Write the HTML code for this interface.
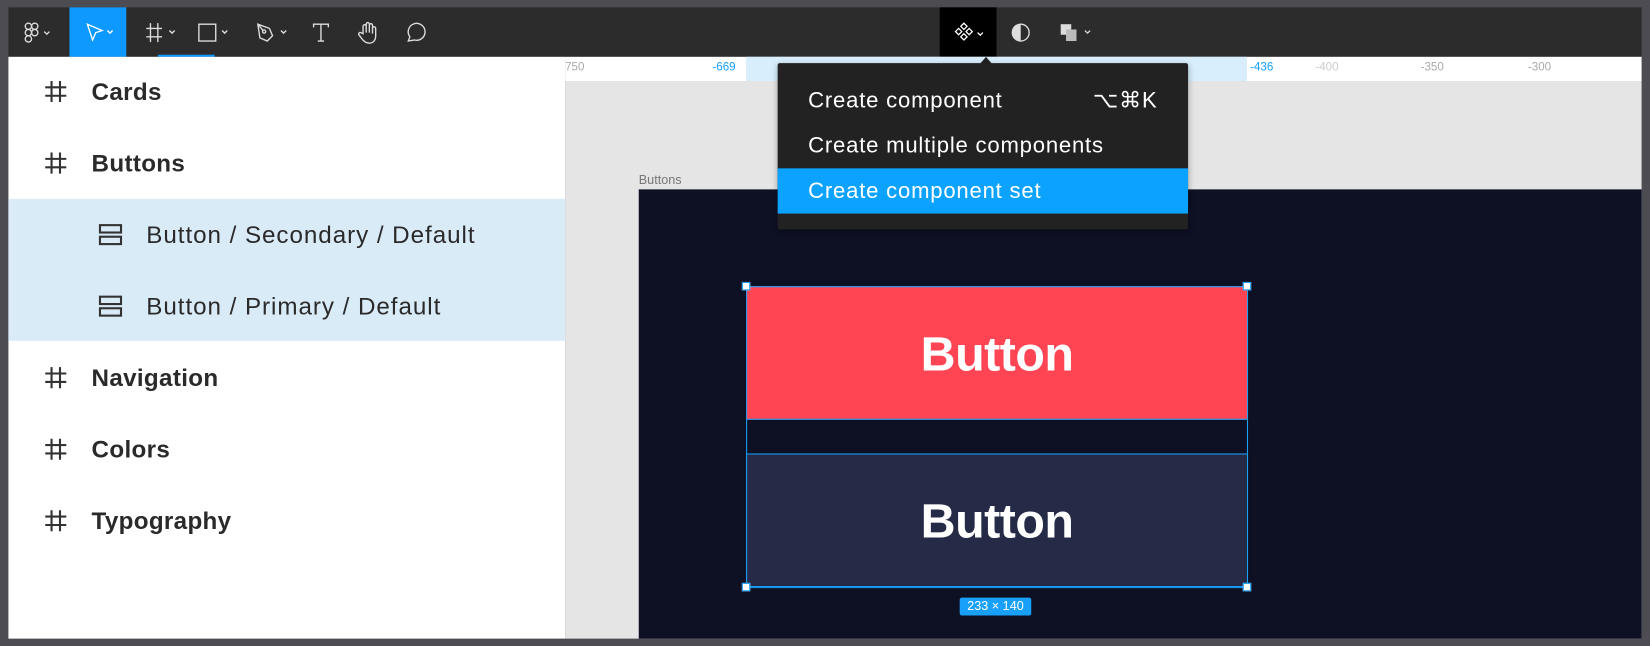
<!DOCTYPE html>
<html><head><meta charset="utf-8"><style>
*{margin:0;padding:0;box-sizing:border-box}
html,body{width:1650px;height:646px;overflow:hidden;background:#4d4c52}
#s{position:absolute;left:0;top:0;width:1568px;height:614px;transform:scale(1.05230,1.0521);transform-origin:0 0;font-family:"Liberation Sans",sans-serif}
.a{position:absolute}
.tb{left:8px;top:7px;width:1552px;height:47px;background:#2c2c2c}
.ic{position:absolute;top:0;height:47px;display:flex;align-items:center;justify-content:center}
.lp{left:8px;top:54px;width:529px;height:553px;background:#fff}
.row{position:absolute;left:0;width:529px;height:34px;display:flex;align-items:center;font-size:23px;color:#2a2a2a}
.row b{font-weight:bold;position:absolute;left:79px;letter-spacing:0.3px}
.row span{position:absolute;left:131px;letter-spacing:0.9px}
.hash{position:absolute;left:33px;top:5px}
.comp{position:absolute;left:85px;top:6px}
.rl{position:absolute;top:4px;font-size:11px;color:#aaa}
.mi{position:absolute;left:0;width:390px;height:43px;line-height:43px;padding-left:29px;color:#fff;font-size:21px;letter-spacing:0.75px}
.h{position:absolute;width:8px;height:8px;background:#fff;border:1px solid #18a0fb}
.btn{color:#fff;font-weight:bold;font-size:46px;display:flex;align-items:center;justify-content:center;font-family:'Liberation Sans',sans-serif;letter-spacing:-0.5px}
</style></head><body><div id="s">
<div class="a tb">
 <div class="ic" style="left:8px;width:40px"><svg width="30" height="22" viewBox="0 0 30 22" fill="none" stroke="#ddd" stroke-width="1.3"><rect x="3" y="2" width="6" height="6" rx="3"/><rect x="9" y="2" width="6" height="6" rx="3"/><rect x="3" y="8" width="6" height="6" rx="3"/><circle cx="12" cy="11" r="3"/><rect x="3" y="14" width="6" height="6" rx="3"/><path d="M21 10l2.5 2.5L26 10"/></svg></div>
 <div class="ic" style="left:58px;width:54px;background:#0d99ff"><svg width="36" height="22" viewBox="0 0 36 22" fill="none" stroke="#fff" stroke-width="1.3"><path d="M8 3l14 6-6 2-3 7z"/><path d="M27 9l2.5 2.5L32 9"/></svg></div>
 <div class="ic" style="left:122px;width:44px"><svg width="36" height="22" viewBox="0 0 36 22" fill="none" stroke="#ddd" stroke-width="1.3"><path d="M9 2v18M16 2v18M5 7h15M5 15h15M27 9l2.5 2.5L32 9"/></svg></div>
 <div class="ic" style="left:172px;width:44px"><svg width="36" height="22" viewBox="0 0 36 22" fill="none" stroke="#ddd" stroke-width="1.3"><rect x="5" y="3" width="16" height="16"/><path d="M27 9l2.5 2.5L32 9"/></svg></div>
 <div class="ic" style="left:228px;width:44px"><svg width="36" height="22" viewBox="0 0 36 22" fill="none" stroke="#ddd" stroke-width="1.3"><path d="M5 3l11 4 3 7-5 5-7-3z"/><circle cx="11" cy="10" r="1.5"/><path d="M5 3l5 6M27 9l2.5 2.5L32 9"/></svg></div>
 <div class="ic" style="left:284px;width:26px"><svg width="20" height="22" viewBox="0 0 20 22" fill="none" stroke="#ddd" stroke-width="1.3"><path d="M3 6V3h14v3M10 3v16M7 19h6"/></svg></div>
 <div class="ic" style="left:329px;width:26px"><svg width="22" height="24" viewBox="0 0 22 24" fill="none" stroke="#ddd" stroke-width="1.3"><path d="M6 13V6a1.5 1.5 0 013 0v6V4a1.5 1.5 0 013 0v8V5a1.5 1.5 0 013 0v8V8a1.5 1.5 0 013 0v7c0 5-3 7-6 7s-5-1-7-4l-3-4a1.5 1.5 0 012-2z"/></svg></div>
 <div class="ic" style="left:374px;width:26px"><svg width="22" height="22" viewBox="0 0 22 22" fill="none" stroke="#ddd" stroke-width="1.3"><path d="M4 19l1.5-4A8 8 0 1110 18z"/></svg></div>
 <div class="ic" style="left:885px;width:54px;background:#000"><svg width="36" height="22" viewBox="0 0 36 22" fill="none" stroke="#fff" stroke-width="1.2"><path d="M14 2l3 3-3 3-3-3zM9 7l3 3-3 3-3-3zM19 7l3 3-3 3-3-3zM14 12l3 3-3 3-3-3zM27 11l2.5 2.5L32 11"/></svg></div>
 <div class="ic" style="left:950px;width:24px"><svg width="20" height="20" viewBox="0 0 20 20"><circle cx="10" cy="10" r="8" fill="none" stroke="#ddd" stroke-width="1.3"/><path d="M10 2a8 8 0 000 16z" fill="#ddd"/></svg></div>
 <div class="ic" style="left:994px;width:44px"><svg width="40" height="22" viewBox="0 0 40 22"><rect x="4" y="3" width="10" height="10" fill="#ddd"/><rect x="9" y="8" width="10" height="11" fill="#bbb"/><path d="M27 9l2.5 2.5L32 9" fill="none" stroke="#ddd" stroke-width="1.2"/></svg></div>
</div>
<div class="a" style="left:150px;top:52px;width:54px;height:2px;background:#0d99ff"></div>
<div class="a lp">
 <div class="row" style="top:16px"><svg class="hash" width="24" height="24" viewBox="0 0 24 24" fill="none" stroke="#333" stroke-width="2"><path d="M8 2v20M16 2v20M2 8h20M2 16h20"/></svg><b>Cards</b></div>
 <div class="row" style="top:84px"><svg class="hash" width="24" height="24" viewBox="0 0 24 24" fill="none" stroke="#333" stroke-width="2"><path d="M8 2v20M16 2v20M2 8h20M2 16h20"/></svg><b>Buttons</b></div>
 <div class="a" style="left:0;top:135px;width:529px;height:135px;background:#daebf8"></div>
 <div class="row" style="top:152px"><svg class="comp" width="24" height="22" viewBox="0 0 24 22" fill="none" stroke="#333" stroke-width="2"><rect x="2" y="2" width="20" height="7"/><rect x="2" y="13" width="20" height="7"/></svg><span>Button / Secondary / Default</span></div>
 <div class="row" style="top:220px"><svg class="comp" width="24" height="22" viewBox="0 0 24 22" fill="none" stroke="#333" stroke-width="2"><rect x="2" y="2" width="20" height="7"/><rect x="2" y="13" width="20" height="7"/></svg><span>Button / Primary / Default</span></div>
 <div class="row" style="top:288px"><svg class="hash" width="24" height="24" viewBox="0 0 24 24" fill="none" stroke="#333" stroke-width="2"><path d="M8 2v20M16 2v20M2 8h20M2 16h20"/></svg><b>Navigation</b></div>
 <div class="row" style="top:356px"><svg class="hash" width="24" height="24" viewBox="0 0 24 24" fill="none" stroke="#333" stroke-width="2"><path d="M8 2v20M16 2v20M2 8h20M2 16h20"/></svg><b>Colors</b></div>
 <div class="row" style="top:424px"><svg class="hash" width="24" height="24" viewBox="0 0 24 24" fill="none" stroke="#333" stroke-width="2"><path d="M8 2v20M16 2v20M2 8h20M2 16h20"/></svg><b>Typography</b></div>
</div>
<div class="a" style="left:537px;top:54px;width:1023px;height:23px;background:#fff">
 <div class="a" style="left:172px;top:0;width:476px;height:23px;background:#d8eefc"></div>
 <div class="rl" style="left:0">750</div>
 <div class="rl" style="left:140px;color:#18a0fb">-669</div>
 <div class="rl" style="left:651px;color:#18a0fb">-436</div>
 <div class="rl" style="left:713px;color:#ccc">-400</div>
 <div class="rl" style="left:813px">-350</div>
 <div class="rl" style="left:915px">-300</div>
</div>
<div class="a" style="left:537px;top:77px;width:1023px;height:530px;background:#e5e5e5"></div>
<div class="a" style="left:607px;top:164px;font-size:12px;color:#777">Buttons</div>
<div class="a" style="left:607px;top:180px;width:953px;height:427px;background:#0e1024"></div>
<div class="a" style="left:709px;top:272px;width:477px;height:287px;border:1px solid #18a0fb"></div>
<div class="a btn" style="left:709px;top:272px;width:477px;height:127px;background:#ff4553;border:1px solid #18a0fb">Button</div>
<div class="a btn" style="left:709px;top:431px;width:477px;height:127px;background:#252a47;border:1px solid #18a0fb">Button</div>
<div class="h" style="left:705px;top:268px"></div><div class="h" style="left:1181px;top:268px"></div>
<div class="h" style="left:705px;top:554px"></div><div class="h" style="left:1181px;top:554px"></div>
<div class="a" style="left:912px;top:568px;width:68px;height:17px;background:#18a0fb;border-radius:2px;color:#fff;font-size:12px;text-align:center;line-height:17px">233 × 140</div>
<div class="a" style="left:931px;top:54px;width:0;height:0;border-left:6px solid transparent;border-right:6px solid transparent;border-bottom:7px solid #222"></div>
<div class="a" style="left:739px;top:60px;width:390px;height:158px;background:#222;border-radius:2px;box-shadow:0 2px 6px rgba(0,0,0,.3)">
 <div class="mi" style="top:14px">Create component<span style="position:absolute;right:29px">⌥⌘K</span></div>
 <div class="mi" style="top:57px">Create multiple components</div>
 <div class="mi" style="top:100px;background:#0ca2ff">Create component set</div>
</div>
</div></body></html>
